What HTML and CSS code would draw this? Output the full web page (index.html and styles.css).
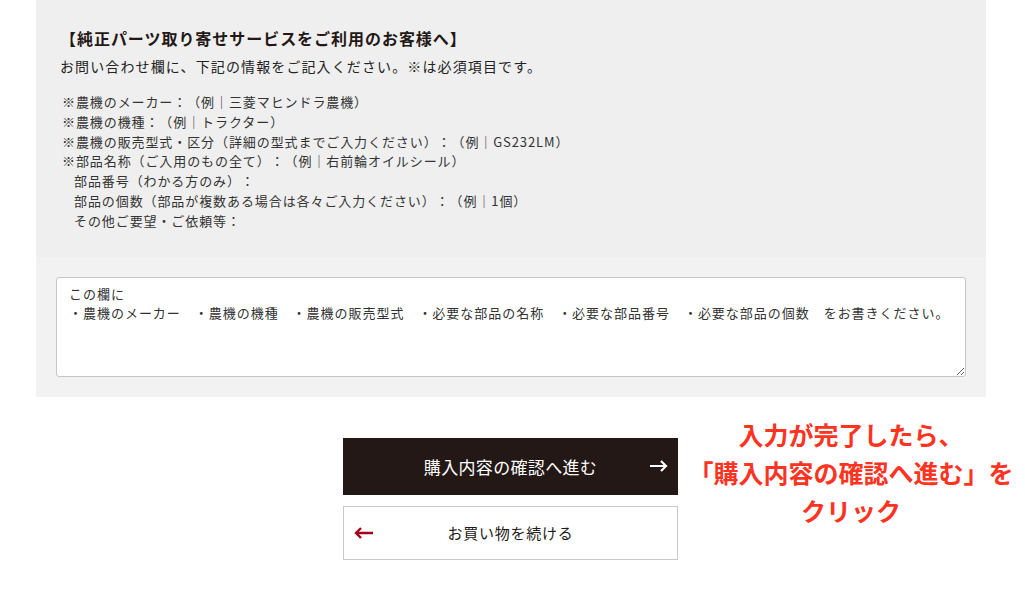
FILE: index.html
```html
<!DOCTYPE html>
<html lang="ja">
<head>
    <meta charset="UTF-8">
    <meta name="viewport" content="width=device-width, initial-scale=1.0">
    <title>ご注文内容</title>
    <link rel="stylesheet" href="styles.css">
</head>
<body>
    <div class="page">
        <div class="notice">
            <div class="notice-info">
                <h2>【純正パーツ取り寄せサービスをご利用のお客様へ】</h2>
                <p class="lead">お問い合わせ欄に、下記の情報をご記入ください。※は必須項目です。</p>
                <ul class="fields">
                    <li>※農機のメーカー：（例｜三菱マヒンドラ農機）</li>
                    <li>※農機の機種：（例｜トラクター）</li>
                    <li>※農機の販売型式・区分（詳細の型式までご入力ください）：（例｜GS232LM）</li>
                    <li>※部品名称（ご入用のもの全て）：（例｜右前輪オイルシール）</li>
                    <li class="sub">部品番号（わかる方のみ）：</li>
                    <li class="sub">部品の個数（部品が複数ある場合は各々ご入力ください）：（例｜1個）</li>
                    <li class="sub">その他ご要望・ご依頼等：</li>
                </ul>
            </div>
            <div class="notice-form">
                <textarea class="memo" placeholder="この欄に&#10;・農機のメーカー　・農機の機種　・農機の販売型式　・必要な部品の名称　・必要な部品番号　・必要な部品の個数　をお書きください。"></textarea>
            </div>
        </div>

        <div class="actions">
            <button class="btn btn-next">
                購入内容の確認へ進む
                <svg class="arrow arrow-right" width="18" height="12" viewBox="0 0 18 12"><path d="M0 6H16M11 1L16 6L11 11" fill="none" stroke="#fff" stroke-width="2.2"/></svg>
            </button>
            <button class="btn btn-back">
                <svg class="arrow arrow-left" width="19" height="12" viewBox="0 0 19 12"><path d="M19 6H2M7 1L2 6L7 11" fill="none" stroke="#a3001c" stroke-width="2.4"/></svg>
                お買い物を続ける
            </button>

            <!-- annotation for the screenshot -->
            <div class="callout">入力が完了したら、<br>「購入内容の確認へ進む」を<br>クリック</div>
        </div>
    </div>
</body>
</html>
```

FILE: styles.css
```css
body {
    margin: 0;
    background-color: #fff;
    font-family: "Noto Sans CJK JP", "Noto Sans", sans-serif;
    color: #222;
    text-spacing-trim: space-all;
}

.page {
    width: 950px;
    margin-left: 36px;
}

.notice-info {
    background-color: #efefef;
    padding: 26px 24px 26px 24px;
}

.notice-info h2 {
    margin: 0;
    font-size: 16px;
    line-height: 24px;
    letter-spacing: 0.06em;
    font-weight: bold;
    color: #231815;
}

.lead {
    margin: 5px 0 0;
    font-size: 14px;
    line-height: 22px;
    letter-spacing: 0.08em;
}

.fields {
    list-style: none;
    margin: 15px 0 0;
    padding: 0 0 0 2px;
    font-size: 13px;
    line-height: 19.8px;
    letter-spacing: 0.07em;
    color: #333;
}

.fields .sub {
    padding-left: 12px;
}

.notice-form {
    background-color: #f2f2f2;
    padding: 20px;
}

.memo {
    display: block;
    box-sizing: border-box;
    width: 100%;
    height: 100px;
    margin: 0;
    padding: 6px 12px;
    border: 1px solid #c6c6c6;
    border-radius: 3px;
    background-color: #fff;
    font-family: inherit;
    font-size: 13px;
    line-height: 19px;
    letter-spacing: 0.075em;
    color: #333;
    text-spacing-trim: space-all;
}

.memo::placeholder {
    color: #333;
    opacity: 1;
}

.actions {
    position: relative;
    width: 335px;
    margin: 41px 0 0 307px;
    display: flex;
    flex-direction: column;
    gap: 11px;
}

.btn {
    position: relative;
    display: flex;
    align-items: center;
    justify-content: center;
    width: 100%;
    margin: 0;
    font-family: inherit;
    cursor: pointer;
}

.btn-next {
    height: 57px;
    border: none;
    background-color: #231815;
    color: #fff;
    font-size: 17px;
    letter-spacing: 0.02em;
}

.btn-back {
    height: 54px;
    border: 1px solid #c9c9c9;
    background-color: #fff;
    color: #231815;
    font-size: 15px;
    letter-spacing: 0.05em;
}

.arrow {
    position: absolute;
    top: 50%;
    margin-top: -6px;
}

.arrow-right {
    right: 10px;
}

.arrow-left {
    left: 10px;
}

.callout {
    position: absolute;
    left: 100%;
    top: -23px;
    width: 340px;
    margin-left: 3px;
    text-align: center;
    font-size: 25px;
    line-height: 38px;
    font-weight: bold;
    color: #ff3322;
}
```
